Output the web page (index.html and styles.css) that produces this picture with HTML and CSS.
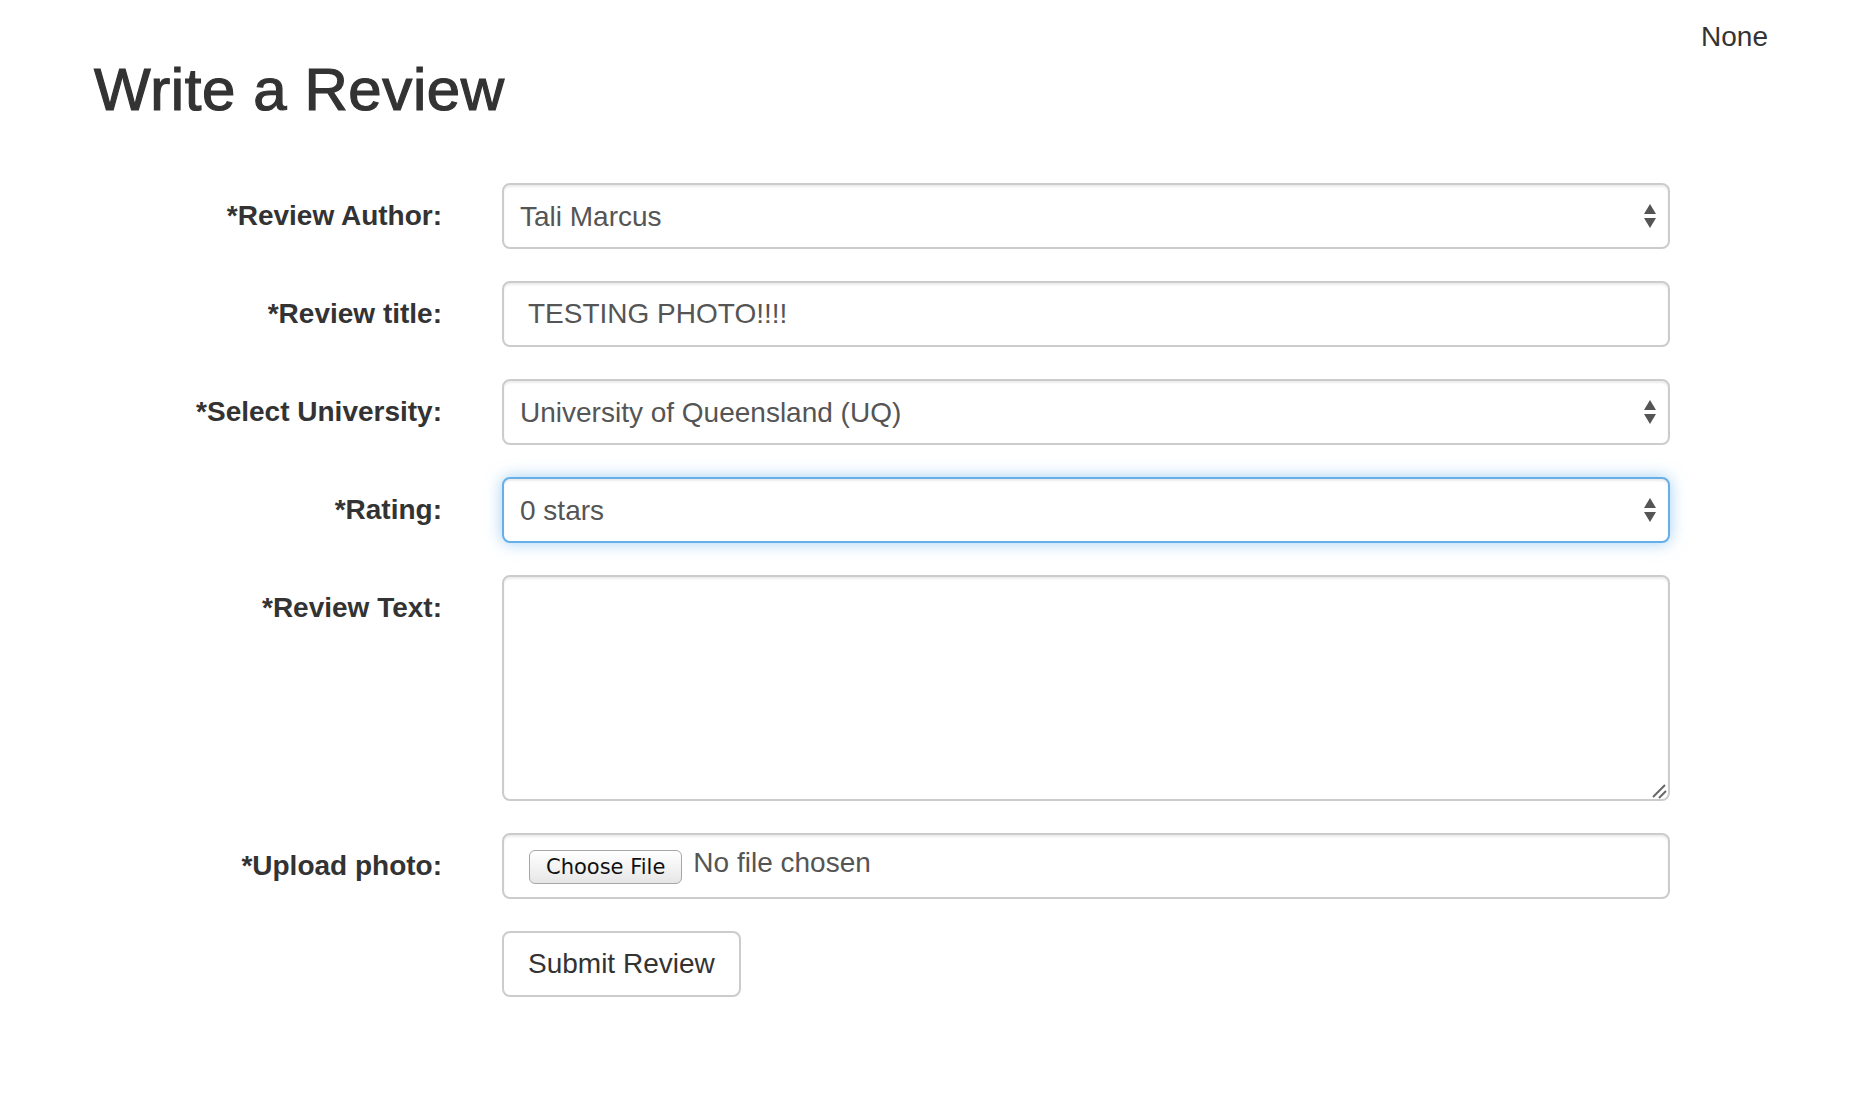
FILE: index.html
```html
<!DOCTYPE html>
<html lang="en">
<head>
<meta charset="utf-8">
<title>Write a Review</title>
<link rel="stylesheet" href="styles.css">
</head>
<body>
<header class="topbar">
  <span class="user">None</span>
</header>
<main class="page">
  <h2 class="title">Write a Review</h2>
  <form class="review-form">
    <label class="lbl" for="author">*Review Author:</label>
    <div class="field">
      <select id="author" class="control select"><option>Tali Marcus</option></select>
      <svg class="arrows" width="12" height="24" viewBox="0 0 12 24"><polygon points="6,0 12,10 0,10"/><polygon points="0,14 12,14 6,24"/></svg>
    </div>

    <label class="lbl" for="rtitle">*Review title:</label>
    <div class="field">
      <input id="rtitle" class="control input" type="text" value="TESTING PHOTO!!!!">
    </div>

    <label class="lbl" for="uni">*Select University:</label>
    <div class="field">
      <select id="uni" class="control select"><option>University of Queensland (UQ)</option></select>
      <svg class="arrows" width="12" height="24" viewBox="0 0 12 24"><polygon points="6,0 12,10 0,10"/><polygon points="0,14 12,14 6,24"/></svg>
    </div>

    <label class="lbl" for="rating">*Rating:</label>
    <div class="field">
      <select id="rating" class="control select focused"><option>0 stars</option></select>
      <svg class="arrows" width="12" height="24" viewBox="0 0 12 24"><polygon points="6,0 12,10 0,10"/><polygon points="0,14 12,14 6,24"/></svg>
    </div>

    <label class="lbl" for="rtext">*Review Text:</label>
    <div class="field">
      <textarea id="rtext" class="control textarea"></textarea>
      <svg class="grip" width="16" height="16" viewBox="0 0 16 16"><line x1="1" y1="14" x2="13" y2="2"/><line x1="7" y1="15" x2="14" y2="8"/></svg>
    </div>

    <label class="lbl">*Upload photo:</label>
    <div class="field">
      <div class="control file">
        <button type="button" class="file-btn">Choose File</button>
        <span class="file-name">No file chosen</span>
      </div>
    </div>

    <span class="lbl"></span>
    <div class="field">
      <button type="submit" class="submit">Submit Review</button>
    </div>
  </form>
</main>
</body>
</html>
```

FILE: styles.css
```css
* { box-sizing: border-box; }

html, body {
  margin: 0;
  background: #fff;
}

body {
  font-family: "Liberation Sans", Arial, sans-serif;
  font-size: 28px;
  color: #333;
  padding-top: 17px;
}

.topbar {
  display: flex;
  justify-content: flex-end;
  height: 40px;
  line-height: 40px;
  padding-right: 106px;
}

.user {
  color: #333;
}

.title {
  margin: 0;
  padding-left: 94px;
  font-size: 60px;
  line-height: 66px;
  font-weight: 400;
  letter-spacing: 0.6px;
  color: #333;
  -webkit-text-stroke: 1.2px #333;
}

.review-form {
  display: grid;
  grid-template-columns: 442px 1168px;
  column-gap: 60px;
  row-gap: 32px;
  margin-top: 60px;
}

.lbl {
  text-align: right;
  font-weight: 700;
  line-height: 66px;
  color: #333;
}

.field {
  position: relative;
}

.control {
  display: block;
  width: 100%;
  height: 66px;
  margin: 0;
  border: 2px solid #ccc;
  border-radius: 8px;
  background: #fff;
  box-shadow: inset 0 2px 2px rgba(0, 0, 0, 0.075);
  font-family: "Liberation Sans", Arial, sans-serif;
  font-size: 28px;
  color: #555;
  outline: none;
}

.input {
  padding: 0 24px;
}

.select {
  -webkit-appearance: none;
  appearance: none;
  padding: 0 40px 0 16px;
}

.select.focused {
  border-color: #66afe9;
  box-shadow: inset 0 2px 2px rgba(0, 0, 0, 0.075), 0 0 16px rgba(102, 175, 233, 0.6);
}

.arrows {
  position: absolute;
  right: 14px;
  top: 21px;
  fill: #555;
}

.textarea {
  height: 226px;
  resize: none;
  padding: 12px 24px;
}

.grip {
  position: absolute;
  right: 2px;
  bottom: 2px;
  stroke: #666;
  stroke-width: 2;
}

.file {
  display: flex;
  align-items: center;
  gap: 11px;
  padding: 0 0 0 25px;
}

.file-btn {
  height: 34px;
  padding: 0 16px;
  border: 1px solid #a6a6a6;
  border-radius: 6px;
  background: linear-gradient(#ffffff, #f1f1f1 60%, #e6e6e6);
  font-family: "DejaVu Sans", sans-serif;
  font-size: 21px;
  color: #111;
  line-height: 32px;
  margin-top: 1px;
}

.file-name {
  color: #555;
  line-height: 32px;
  margin-bottom: 7px;
}

.submit {
  height: 66px;
  padding: 0 24px;
  border: 2px solid #ccc;
  border-radius: 8px;
  background: #fff;
  font-family: "Liberation Sans", Arial, sans-serif;
  font-size: 28px;
  color: #333;
}
```
